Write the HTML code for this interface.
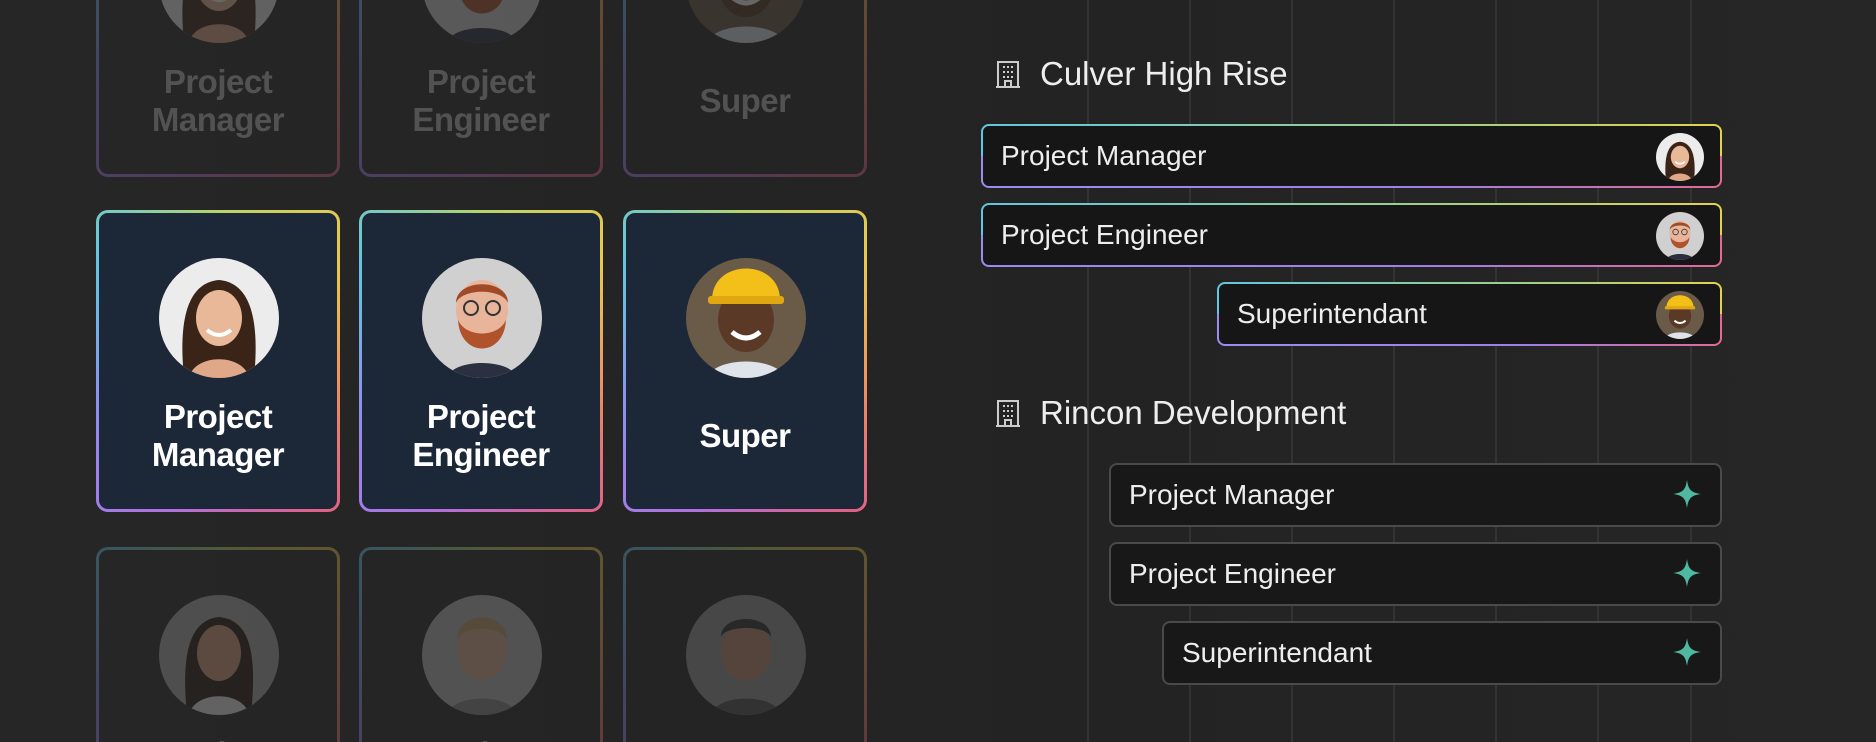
<!DOCTYPE html>
<html><head><meta charset="utf-8"><style>
*{margin:0;padding:0;box-sizing:border-box}
html,body{width:1876px;height:742px;overflow:hidden}
body{background:#242424;font-family:"Liberation Sans",sans-serif}
#w{position:relative;width:1876px;height:742px;overflow:hidden;background:linear-gradient(90deg,#262626 0%,#232323 60%,#262626 100%)}
.vl{position:absolute;top:0;height:742px;width:2px;background:#333}
.card{position:absolute;width:244px;height:302px;border:3px solid transparent;border-radius:12px;
background:linear-gradient(#1c2738,#1c2738) padding-box,conic-gradient(from 0deg,#b6d46a,#e9c84c 50deg,#f0925c 100deg,#e06088 145deg,#b070e0 200deg,#8c90f0 250deg,#62c6e0 310deg,#b6d46a 360deg) border-box}
.card .av{position:absolute;left:60px;top:45px;width:120px;height:120px;border-radius:50%;overflow:hidden}
.card .t{position:absolute;left:0;right:0;top:185px;text-align:center;color:#fff;font-size:33px;font-weight:bold;line-height:38px;letter-spacing:-0.5px}
.dim{opacity:.3}
.dim2{background:linear-gradient(#262626,#262626) padding-box,conic-gradient(from 0deg,#b6d46a,#e9c84c 50deg,#f0925c 100deg,#e06088 145deg,#b070e0 200deg,#8c90f0 250deg,#62c6e0 310deg,#b6d46a 360deg) border-box}
.bot{height:195px;border-bottom-width:0;border-radius:12px 12px 0 0}
.h{position:absolute;color:#eee;font-size:33px;display:flex;align-items:center}
.h svg{margin-right:20px}
.row{position:absolute;height:64px;border-radius:8px;border:2px solid transparent;color:#eee;font-size:28px;display:flex;align-items:center;padding-left:18px}
.row.g{background:linear-gradient(#161616,#161616) padding-box,linear-gradient(90deg,#62c6e0,#9ccf8a 60%,#e2d24e) top/100% 50% no-repeat border-box,linear-gradient(90deg,#9a8cf0,#a07ee8 60%,#e06a94) bottom/100% 50% no-repeat border-box}
.row.p{background:#181818;border:2px solid #4a4a4a}
.row .ra{position:absolute;right:16px;top:7px;width:48px;height:48px;border-radius:50%;overflow:hidden}
.row .st{position:absolute;right:18px;top:14px}
</style></head><body><div id="w">
<div class="vl" style="left:1087px"></div><div class="vl" style="left:1189px"></div><div class="vl" style="left:1291px"></div><div class="vl" style="left:1393px"></div><div class="vl" style="left:1495px"></div><div class="vl" style="left:1597px"></div><div class="vl" style="left:1690px"></div>

<svg width="0" height="0" style="position:absolute">
<defs>
<symbol id="f1" viewBox="0 0 120 120"><rect width="120" height="120" fill="#ececec"/><path d="M25 120 C20 70 25 25 60 22 C95 25 100 70 95 120Z" fill="#3a2418"/><ellipse cx="60" cy="60" rx="23" ry="28" fill="#e8b898"/><path d="M30 120 C35 95 85 95 90 120Z" fill="#e0a888"/><path d="M48 72 Q60 82 72 72" stroke="#fff" stroke-width="4" fill="none"/></symbol>
<symbol id="f2" viewBox="0 0 120 120"><rect width="120" height="120" fill="#d0d0d0"/><ellipse cx="60" cy="52" rx="26" ry="30" fill="#e8b49a"/><path d="M34 45 C34 20 86 20 86 45 C80 30 40 30 34 45Z" fill="#a04a28"/><path d="M36 62 C38 100 82 100 84 62 C76 80 44 80 36 62Z" fill="#b0522c"/><circle cx="49" cy="50" r="7" stroke="#333" stroke-width="2" fill="none"/><circle cx="71" cy="50" r="7" stroke="#333" stroke-width="2" fill="none"/><path d="M25 120 C30 100 90 100 95 120Z" fill="#2a3040"/></symbol>
<symbol id="f3" viewBox="0 0 120 120"><rect width="120" height="120" fill="#6a5a48"/><ellipse cx="60" cy="62" rx="28" ry="32" fill="#5a3a26"/><path d="M26 42 C26 0 94 0 94 42Z" fill="#f2c018"/><rect x="22" y="38" width="76" height="8" rx="3" fill="#e0a810"/><path d="M46 74 Q60 86 74 74" stroke="#fff" stroke-width="5" fill="none"/><path d="M20 120 C30 98 90 98 100 120Z" fill="#dfe4ea"/></symbol>
<symbol id="f4" viewBox="0 0 120 120"><rect width="120" height="120" fill="#aaa"/><path d="M28 120 C22 60 30 25 60 22 C92 25 98 60 92 120Z" fill="#2a1a12"/><ellipse cx="60" cy="58" rx="22" ry="28" fill="#d8a080"/><path d="M30 120 C35 95 85 95 90 120Z" fill="#eee"/></symbol>
<symbol id="f5" viewBox="0 0 120 120"><rect width="120" height="120" fill="#bbb"/><ellipse cx="60" cy="55" rx="25" ry="30" fill="#e0b094"/><path d="M35 45 C35 15 85 15 85 45 C80 30 40 30 35 45Z" fill="#c8a070"/><path d="M25 120 C30 98 90 98 95 120Z" fill="#8a8a8a"/></symbol>
<symbol id="f6" viewBox="0 0 120 120"><rect width="120" height="120" fill="#999"/><ellipse cx="60" cy="56" rx="25" ry="30" fill="#c89070"/><path d="M35 42 C35 18 85 18 85 42 C80 30 40 30 35 42Z" fill="#333"/><path d="M25 120 C30 98 90 98 95 120Z" fill="#555"/></symbol>
<symbol id="bld" viewBox="0 0 24 28"><path d="M2 27 V2 H22 V27 M0 27 H24 M9 27 V21 H15 V27" stroke="#ccc" stroke-width="2" fill="none"/><g fill="#ccc"><rect x="7" y="6" width="2" height="2"/><rect x="11" y="6" width="2" height="2"/><rect x="15" y="6" width="2" height="2"/><rect x="7" y="11" width="2" height="2"/><rect x="11" y="11" width="2" height="2"/><rect x="15" y="11" width="2" height="2"/><rect x="7" y="16" width="2" height="2"/><rect x="11" y="16" width="2" height="2"/><rect x="15" y="16" width="2" height="2"/></g></symbol>
<symbol id="star" viewBox="0 0 30 30"><path d="M15 1 C16.5 11 19 13.5 29 15 C19 16.5 16.5 19 15 29 C13.5 19 11 16.5 1 15 C11 13.5 13.5 11 15 1Z" fill="#4fb8a0"/></symbol>
</defs></svg>

<div class="card dim dim2" style="left:96px;top:-125px"><div class="av"><svg width="120" height="120"><use href="#f1"/></svg></div><div class="t" style="color:#bbb">Project<br>Manager</div></div>
<div class="card dim dim2" style="left:359px;top:-125px"><div class="av"><svg width="120" height="120"><use href="#f2"/></svg></div><div class="t" style="color:#bbb">Project<br>Engineer</div></div>
<div class="card dim dim2" style="left:623px;top:-125px"><div class="av"><svg width="120" height="120"><use href="#f3"/></svg></div><div class="t" style="color:#bbb;top:204px">Super</div></div>

<div class="card" style="left:96px;top:210px"><div class="av"><svg width="120" height="120"><use href="#f1"/></svg></div><div class="t">Project<br>Manager</div></div>
<div class="card" style="left:359px;top:210px"><div class="av"><svg width="120" height="120"><use href="#f2"/></svg></div><div class="t">Project<br>Engineer</div></div>
<div class="card" style="left:623px;top:210px"><div class="av"><svg width="120" height="120"><use href="#f3"/></svg></div><div class="t" style="top:204px">Super</div></div>

<div class="card dim dim2 bot" style="left:96px;top:547px;overflow:hidden"><div class="av"><svg width="120" height="120"><use href="#f4"/></svg></div><div class="t" style="color:#bbb">Project</div></div>
<div class="card dim dim2 bot" style="left:359px;top:547px;overflow:hidden"><div class="av"><svg width="120" height="120"><use href="#f5"/></svg></div><div class="t" style="color:#bbb">Project</div></div>
<div class="card dim dim2 bot" style="left:623px;top:547px;overflow:hidden"><div class="av"><svg width="120" height="120"><use href="#f6"/></svg></div></div>

<div class="h" style="left:996px;top:55px"><svg width="24" height="28"><use href="#bld"/></svg>Culver High Rise</div>
<div class="row g" style="left:981px;top:124px;width:741px">Project Manager<div class="ra"><svg width="48" height="48" viewBox="0 0 120 120"><use href="#f1"/></svg></div></div>
<div class="row g" style="left:981px;top:203px;width:741px">Project Engineer<div class="ra"><svg width="48" height="48" viewBox="0 0 120 120"><use href="#f2"/></svg></div></div>
<div class="row g" style="left:1217px;top:282px;width:505px">Superintendant<div class="ra"><svg width="48" height="48" viewBox="0 0 120 120"><use href="#f3"/></svg></div></div>

<div class="h" style="left:996px;top:394px"><svg width="24" height="28"><use href="#bld"/></svg>Rincon Development</div>
<div class="row p" style="left:1109px;top:463px;width:613px">Project Manager<svg class="st" width="30" height="30"><use href="#star"/></svg></div>
<div class="row p" style="left:1109px;top:542px;width:613px">Project Engineer<svg class="st" width="30" height="30"><use href="#star"/></svg></div>
<div class="row p" style="left:1162px;top:621px;width:560px">Superintendant<svg class="st" width="30" height="30"><use href="#star"/></svg></div>
</div></body></html>
